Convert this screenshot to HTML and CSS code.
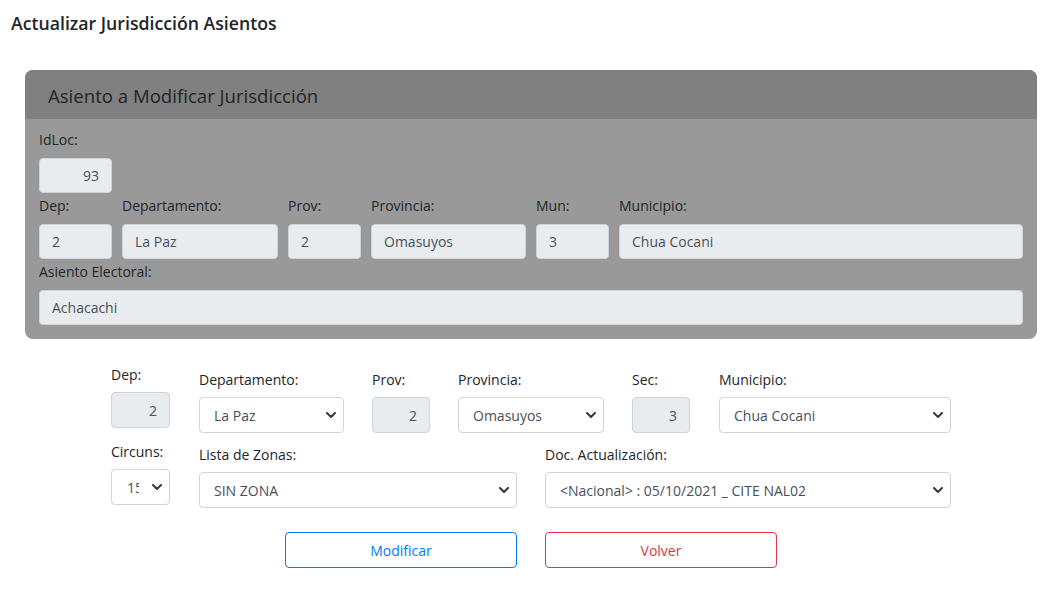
FILE: index.html
```html
<!DOCTYPE html>
<html lang="es">
<head>
<meta charset="utf-8">
<title>Actualizar Jurisdicción Asientos</title>
<link rel="stylesheet" href="styles.css">
</head>
<body>
<div class="page">
  <h1 class="title">Actualizar Jurisdicción Asientos</h1>

  <div class="card">
    <div class="card-header">Asiento a Modificar Jurisdicción</div>
    <div class="card-body">
      <div class="row">
        <div class="field w-73">
          <label class="lbl">IdLoc:</label>
          <input class="ctl ro right" value="93" readonly>
        </div>
      </div>
      <div class="row">
        <div class="field w-73">
          <label class="lbl">Dep:</label>
          <input class="ctl ro" value="2" readonly>
        </div>
        <div class="field w-156">
          <label class="lbl">Departamento:</label>
          <input class="ctl ro" value="La Paz" readonly>
        </div>
        <div class="field w-73">
          <label class="lbl">Prov:</label>
          <input class="ctl ro" value="2" readonly>
        </div>
        <div class="field w-155">
          <label class="lbl">Provincia:</label>
          <input class="ctl ro" value="Omasuyos" readonly>
        </div>
        <div class="field w-73">
          <label class="lbl">Mun:</label>
          <input class="ctl ro" value="3" readonly>
        </div>
        <div class="field grow">
          <label class="lbl">Municipio:</label>
          <input class="ctl ro" value="Chua Cocani" readonly>
        </div>
      </div>
      <div class="row">
        <div class="field grow">
          <label class="lbl">Asiento Electoral:</label>
          <input class="ctl ro" value="Achacachi" readonly>
        </div>
      </div>
    </div>
  </div>

  <div class="form">
    <div class="frow">
      <div class="ffield w-59 up1 mr1">
        <label class="flbl">Dep:</label>
        <input class="fctl ro right" value="2" readonly>
      </div>
      <div class="ffield w-145">
        <label class="flbl">Departamento:</label>
        <div class="sel"><select class="fctl"><option>La Paz</option></select><svg class="chev" viewBox="0 0 10 6" width="10" height="6"><polyline points="1,1 5,5 9,1" fill="none" stroke="#343a40" stroke-width="2" stroke-linecap="round" stroke-linejoin="round"/></svg></div>
      </div>
      <div class="ffield w-58">
        <label class="flbl">Prov:</label>
        <input class="fctl ro right" value="2" readonly>
      </div>
      <div class="ffield w-146">
        <label class="flbl">Provincia:</label>
        <div class="sel"><select class="fctl"><option>Omasuyos</option></select><svg class="chev" viewBox="0 0 10 6" width="10" height="6"><polyline points="1,1 5,5 9,1" fill="none" stroke="#343a40" stroke-width="2" stroke-linecap="round" stroke-linejoin="round"/></svg></div>
      </div>
      <div class="ffield w-58 mr1">
        <label class="flbl">Sec:</label>
        <input class="fctl ro right" value="3" readonly>
      </div>
      <div class="ffield w-232">
        <label class="flbl">Municipio:</label>
        <div class="sel"><select class="fctl"><option>Chua Cocani</option></select><svg class="chev" viewBox="0 0 10 6" width="10" height="6"><polyline points="1,1 5,5 9,1" fill="none" stroke="#343a40" stroke-width="2" stroke-linecap="round" stroke-linejoin="round"/></svg></div>
      </div>
    </div>
    <div class="frow r2">
      <div class="ffield w-59 up2 mr1">
        <label class="flbl">Circuns:</label>
        <div class="sel"><select class="fctl tight"><option>15</option></select><svg class="chev" viewBox="0 0 10 6" width="10" height="6"><polyline points="1,1 5,5 9,1" fill="none" stroke="#343a40" stroke-width="2" stroke-linecap="round" stroke-linejoin="round"/></svg></div>
      </div>
      <div class="ffield w-318">
        <label class="flbl">Lista de Zonas:</label>
        <div class="sel"><select class="fctl"><option>SIN ZONA</option></select><svg class="chev" viewBox="0 0 10 6" width="10" height="6"><polyline points="1,1 5,5 9,1" fill="none" stroke="#343a40" stroke-width="2" stroke-linecap="round" stroke-linejoin="round"/></svg></div>
      </div>
      <div class="ffield w-406">
        <label class="flbl">Doc. Actualización:</label>
        <div class="sel"><select class="fctl"><option>&lt;Nacional&gt; : 05/10/2021 _ CITE NAL02</option></select><svg class="chev" viewBox="0 0 10 6" width="10" height="6"><polyline points="1,1 5,5 9,1" fill="none" stroke="#343a40" stroke-width="2" stroke-linecap="round" stroke-linejoin="round"/></svg></div>
      </div>
    </div>
    <div class="brow">
      <button class="btn btn-blue">Modificar</button>
      <button class="btn btn-red">Volver</button>
    </div>
  </div>
</div>
</body>
</html>
```

FILE: styles.css
```css
* { box-sizing: border-box; }
html, body { margin: 0; padding: 0; background: #fff; }
body {
  font-family: "Open Sans", "Noto Sans", "Liberation Sans", sans-serif;
  font-size: 14px;
  color: #212529;
}
.page { padding: 10px 25px 0 11px; width: 1062px; }
.title {
  margin: 0;
  font-size: 17.7px;
  font-weight: 600;
  line-height: 26px;
  color: #212529;
}
.card {
  margin: 34px 0 0 14px;
  width: 1012px;
  background: #999999;
  border-radius: 8px;
  overflow: hidden;
}
.card-header {
  background: #808080;
  height: 49px;
  padding: 13px 0 0 23px;
  font-size: 18.6px;
  font-weight: 500;
  line-height: 25px;
  color: #212529;
}
.card-body { padding: 8px 14px 14px 14px; }
.row { display: flex; gap: 10px; }
.field { display: flex; flex-direction: column; }
.grow { flex: 1; }
.w-73 { width: 73px; }
.w-156 { width: 156px; }
.w-155 { width: 155px; }
.lbl { display: block; line-height: 24px; height: 24px; margin: 1px 0 6px; color: #212529; }
.ctl {
  display: block;
  width: 100%;
  height: 35px;
  padding: 0 12px;
  font: inherit;
  color: #495057;
  background: #e9ecef;
  border: 1px solid #ced4da;
  border-radius: 4px;
  outline: none;
}
.right { text-align: right; }

.form { margin: 29px 0 0 100px; width: 840px; }
.frow { display: flex; gap: 28px; align-items: flex-start; }
.r2 { margin-top: 10px; }
.ffield { display: flex; flex-direction: column; }
.ffield.up1 { margin-top: -5px; }
.ffield.up2 { margin-top: -3px; }
.mr1 { margin-right: 1px; }
.w-59 { width: 59px; }
.w-58 { width: 58px; }
.w-145 { width: 145px; }
.w-146 { width: 146px; }
.w-232 { width: 232px; }
.w-318 { width: 318px; }
.w-406 { width: 406px; }
.flbl { display: block; line-height: 24px; height: 24px; margin-bottom: 5px; color: #212529; }
.fctl {
  display: block;
  width: 100%;
  height: 36px;
  padding: 0 34px 0 14px;
  font: inherit;
  color: #495057;
  background: #fff;
  border: 1px solid #ced4da;
  border-radius: 4px;
  outline: none;
  appearance: none;
  -webkit-appearance: none;
}
.fctl.tight { padding: 0 30px 0 15px; }
.fctl.ro { background: #e9ecef; padding: 0 12px; }
.sel { position: relative; }
.chev {
  position: absolute;
  right: 8px;
  top: 15px;
  pointer-events: none;
}
.brow { display: flex; gap: 28px; margin: 24px 0 0 174px; }
.btn {
  width: 232px;
  height: 36px;
  font: inherit;
  background: #fff;
  border-radius: 4px;
  cursor: pointer;
}
.btn-blue { border: 1px solid #007bff; color: #007bff; }
.btn-red { border: 1px solid #dc3545; color: #dc3545; }
```
